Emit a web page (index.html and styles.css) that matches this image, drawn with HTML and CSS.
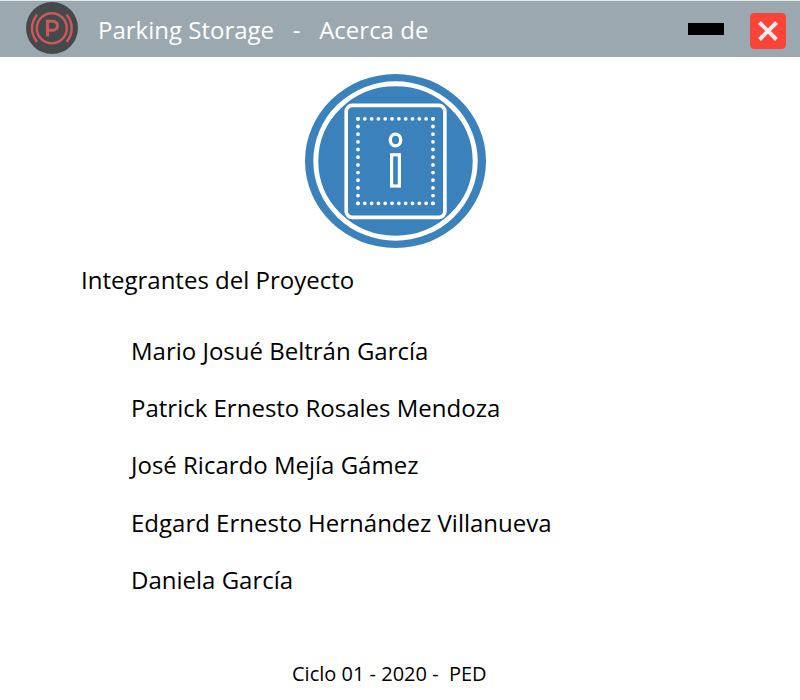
FILE: index.html
```
<!DOCTYPE html>
<html lang="es">
<head>
<meta charset="utf-8">
<title>Parking Storage - Acerca de</title>
<link rel="stylesheet" href="styles.css">
</head>
<body>
<header class="titlebar">
  <svg class="logo" width="52" height="52" viewBox="0 0 52 52" fill="none" stroke="#c9595b" stroke-width="2.5" stroke-linecap="round">
    <circle cx="26" cy="26" r="26" fill="#45494c" stroke="none"/>
    <circle cx="25.8" cy="26.3" r="15"/>
    <path d="M21.5 34.5V19.3H27a4.5 4.5 0 0 1 0 9H21.5" stroke-width="3.1" stroke-linecap="butt"/>
    <path d="M10.5 13.5a20.6 20.6 0 0 0 0 25.6M41.2 13.5a20.6 20.6 0 0 1 0 25.6"/>
  </svg>
  <h1 class="title">Parking Storage   -   Acerca de</h1>
  <div class="minimize"></div>
  <svg class="close" width="36" height="36" viewBox="0 0 36 36">
    <rect width="36" height="36" rx="4.5" fill="#fa4437"/>
    <path d="M9.5 9.5l17 17M26.5 9.5l-17 17" stroke="#ffebee" stroke-width="4"/>
  </svg>
</header>
<main>
  <svg class="info" width="182" height="174" viewBox="0 0 182 174" fill="none" stroke="#fff">
    <ellipse cx="90.5" cy="87" rx="90.5" ry="87" fill="#3b81bb" stroke="none"/>
    <ellipse cx="90.5" cy="87" rx="79.7" ry="77.2" stroke-width="5"/>
    <rect x="41.2" y="31.4" width="98.7" height="112" rx="6" stroke-width="3.6"/>
    <path d="M53 44.8H128M53 129.3H128" stroke-width="3.8" stroke-linecap="round" stroke-dasharray="0 6.81"/>
    <path d="M53 44.8V129.5M128 44.8V129.5" stroke-width="3.8" stroke-linecap="round" stroke-dasharray="0 7.68"/>
    <ellipse cx="90.5" cy="66" rx="5.2" ry="5.9" stroke-width="3.4"/>
    <rect x="86.6" y="80.8" width="7.8" height="31.2" stroke-width="3.2"/>
  </svg>
  <h2 class="heading">Integrantes del Proyecto</h2>
  <ul class="members">
    <li>Mario Josué Beltrán García</li>
    <li>Patrick Ernesto Rosales Mendoza</li>
    <li>José Ricardo Mejía Gámez</li>
    <li>Edgard Ernesto Hernández Villanueva</li>
    <li>Daniela García</li>
  </ul>
</main>
<footer class="footer">Ciclo 01 - 2020 -  PED</footer>
</body>
</html>
```
FILE: styles.css
```
body {
  margin: 0;
  height: 700px;
  overflow: hidden;
  background: #fff;
  color: #000;
  font: 24px "Open Sans", sans-serif;
}
.titlebar {
  box-sizing: border-box;
  height: 57px;
  border-top: 1px solid #e4e8ea;
  padding: 0 14px 0 26px;
  display: flex;
  align-items: center;
  background: #9ca8af;
}
.logo { margin-top: -2px; }
.title {
  margin: 2px auto 0 20px;
  font-size: 24px;
  font-weight: 400;
  line-height: 54px;
  white-space: pre;
  color: #fff;
}
.minimize {
  width: 36px;
  height: 12px;
  margin-right: 26px;
  background: #000;
}
.close { margin-top: 4px; }
.info {
  display: block;
  margin: 17px 0 15px 305px;
}
.heading {
  margin: 0 0 25px 81px;
  font-size: 24px;
  font-weight: 400;
  line-height: 34px;
}
.members {
  margin: 0 0 0 131px;
  padding: 0;
  list-style: none;
  line-height: 57px;
}
.members li:nth-child(3) { margin-bottom: 1px; }
.footer {
  margin: 52px 0 0 292px;
  font-size: 20px;
  line-height: 28px;
  white-space: pre;
}
```
